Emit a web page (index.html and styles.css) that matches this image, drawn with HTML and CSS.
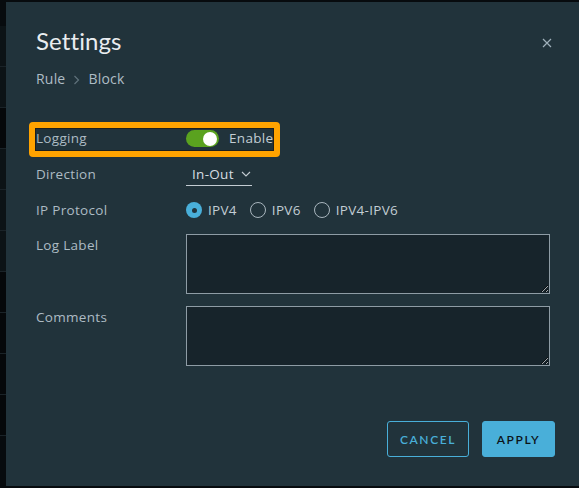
FILE: index.html
```html
<!DOCTYPE html>
<html lang="en">
<head>
<meta charset="utf-8">
<title>Settings</title>
<link rel="stylesheet" href="styles.css">
</head>
<body>
<div class="backdrop">
  <div class="bg-row"></div>
  <div class="bg-row"></div>
  <div class="bg-row dark"></div>
  <div class="bg-row"></div>
  <div class="bg-row"></div>
  <div class="bg-row"></div>
  <div class="bg-row dark"></div>
  <div class="bg-row dark"></div>
  <div class="bg-row dark"></div>
  <div class="bg-row dark"></div>
</div>

<div class="modal" role="dialog">
  <div class="modal-header">
    <h1 class="modal-title">Settings</h1>
    <button class="close" aria-label="Close">
      <svg width="10" height="10" viewBox="0 0 10 10"><path d="M1 1 L9 9 M9 1 L1 9" stroke="#9fb0ba" stroke-width="1.2" fill="none"/></svg>
    </button>
  </div>
  <div class="breadcrumb">
    <span>Rule</span>
    <svg class="crumb-sep" width="7" height="10" viewBox="0 0 7 10"><path d="M1.5 1 L5.5 5 L1.5 9" stroke="#5f717b" stroke-width="1.2" fill="none"/></svg>
    <span>Block</span>
  </div>

  <div class="form">
    <div class="row highlight">
      <label class="label">Logging</label>
      <div class="control">
        <span class="toggle"><span class="knob"></span></span>
        <span class="value">Enable</span>
      </div>
    </div>

    <div class="row row-direction">
      <label class="label">Direction</label>
      <div class="control">
        <div class="select">
          <span>In-Out</span>
          <svg width="10" height="6" viewBox="0 0 10 6"><path d="M1 1 L5 5 L9 1" stroke="#c3ccd2" stroke-width="1.1" fill="none"/></svg>
        </div>
      </div>
    </div>

    <div class="row row-protocol">
      <label class="label">IP Protocol</label>
      <div class="control radios">
        <span class="radio"><span class="dot checked"></span><span class="value">IPV4</span></span>
        <span class="radio"><span class="dot"></span><span class="value">IPV6</span></span>
        <span class="radio"><span class="dot"></span><span class="value">IPV4-IPV6</span></span>
      </div>
    </div>

    <div class="row row-area">
      <label class="label">Log Label</label>
      <textarea class="area"></textarea>
    </div>

    <div class="row row-area">
      <label class="label">Comments</label>
      <textarea class="area"></textarea>
    </div>
  </div>

  <div class="footer">
    <button class="btn btn-outline">CANCEL</button>
    <button class="btn btn-primary">APPLY</button>
  </div>
</div>
</body>
</html>
```

FILE: styles.css
```css
* { box-sizing: border-box; }

html, body {
  margin: 0;
  padding: 0;
  height: 100%;
}

body {
  background: #070b0e;
  font-family: "Open Sans", "Noto Sans", sans-serif;
  color: #adbbc4;
  overflow: hidden;
}

.backdrop {
  padding-top: 26px;
}

.bg-row {
  height: 41px;
  border-bottom: 1px solid #1a2328;
  background: #0c1316;
}

.bg-row.dark {
  background: #05080a;
}

.modal {
  position: absolute;
  left: 6px;
  top: 2px;
  width: 580px;
  height: 484px;
  background: #21333b;
  padding: 25px 0 0 30px;
  display: flex;
  flex-direction: column;
}

.modal-header {
  display: flex;
  align-items: center;
  justify-content: space-between;
  width: 516px;
  height: 28px;
}

.modal-title {
  margin: 0;
  font-family: "Lato", "Open Sans", sans-serif;
  font-size: 24px;
  font-weight: 400;
  line-height: 28px;
  color: #e9edf0;
  letter-spacing: 0.1px;
}

.close {
  background: none;
  border: 0;
  padding: 0;
  width: 10px;
  height: 10px;
  display: flex;
  margin-top: 4px;
}

.breadcrumb {
  margin-top: 14px;
  display: flex;
  align-items: center;
  gap: 8px;
  font-size: 14px;
  line-height: 20px;
  color: #aebcc5;
  letter-spacing: 0.2px;
}

.crumb-sep {
  margin-top: 1px;
}

.form {
  margin-top: 33px;
  display: flex;
  flex-direction: column;
  font-size: 13.5px;
  letter-spacing: 0.3px;
}

.row {
  display: flex;
  align-items: center;
}

.label {
  width: 150px;
  flex: none;
  color: #adbbc4;
  line-height: 20px;
}

.control {
  display: flex;
  align-items: center;
}

.highlight {
  align-self: flex-start;
  margin-left: -7px;
  height: 35px;
  border: 6px solid #ffa300;
  border-radius: 4px;
  box-shadow: inset 0 0 0 1px #1c1f1f;
  padding: 0 1px;
}

.highlight .label,
.highlight .value {
  margin-top: -3px;
}

.toggle {
  position: relative;
  width: 33px;
  height: 17px;
  border-radius: 9px;
  background: #5aa21f;
  margin-right: 10px;
  margin-top: -2px;
}

.knob {
  position: absolute;
  right: 2px;
  top: 1.5px;
  width: 14px;
  height: 14px;
  border-radius: 50%;
  background: #ffffff;
}

.value {
  color: #c2cdd4;
  line-height: 20px;
}

.row-direction {
  margin-top: 5px;
  height: 24px;
}

.select {
  width: 66px;
  height: 24px;
  border-bottom: 1px solid #c3ccd2;
  display: flex;
  align-items: center;
  padding-left: 6px;
  gap: 7px;
  color: #d5dde2;
}

.row-protocol {
  margin-top: 12px;
  height: 24px;
}

.radio {
  display: flex;
  align-items: center;
  margin-right: 13px;
}

.dot {
  width: 16px;
  height: 16px;
  border-radius: 50%;
  border: 1px solid #a9b6be;
  margin-right: 6px;
  flex: none;
  position: relative;
}

.dot.checked {
  border: 0;
  background: #49afd9;
}

.dot.checked::after {
  content: "";
  position: absolute;
  left: 5.5px;
  top: 5.5px;
  width: 5px;
  height: 5px;
  border-radius: 50%;
  background: #21333b;
}

.row-area {
  margin-top: 12px;
  align-items: flex-start;
}

.row-area .label {
  margin-top: 1px;
}

.area {
  width: 364px;
  height: 60px;
  background: #17242b;
  border: 1px solid #8e9ca5;
  border-radius: 0;
  margin: 0;
  resize: both;
  color: #d5dde2;
  font: inherit;
}

.footer {
  margin-top: auto;
  margin-bottom: 29px;
  display: flex;
  gap: 13px;
  padding-left: 351px;
}

.btn {
  height: 36px;
  border-radius: 3px;
  font-family: "Lato", "Noto Sans", sans-serif;
  font-size: 12px;
  font-weight: 600;
  letter-spacing: 1.6px;
  padding: 0;
  cursor: pointer;
}

.btn-outline {
  width: 82px;
  background: transparent;
  border: 1px solid #49afd9;
  color: #49afd9;
}

.btn-primary {
  width: 73px;
  background: #49afd9;
  border: 1px solid #49afd9;
  color: #0c1418;
}
```
